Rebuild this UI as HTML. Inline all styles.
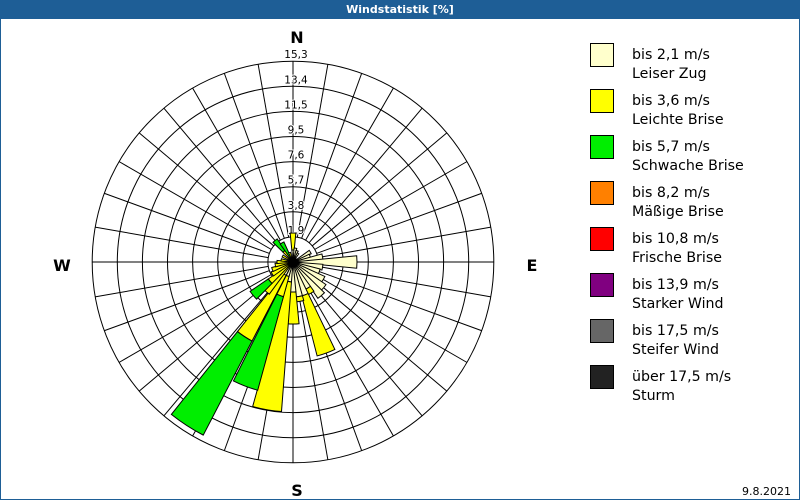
<!DOCTYPE html>
<html><head><meta charset="utf-8">
<style>
html,body{margin:0;padding:0;background:#fff;}
#w{position:relative;width:798px;height:498px;border:1px solid #1e5e96;background:#fff;overflow:hidden;font-family:"DejaVu Sans","Liberation Sans",sans-serif;}
#t{position:absolute;left:0;top:0;width:798px;height:18px;background:#1e5e96;color:#fff;font-weight:bold;font-size:11px;line-height:18px;text-align:center;}
.lb{position:absolute;left:589px;width:22px;height:22px;border:1px solid #000;}
.lt{position:absolute;left:631px;font-size:14.2px;line-height:19px;color:#000;}
#d{position:absolute;right:8px;top:484px;font-size:11px;}
svg{position:absolute;left:0;top:0;}
</style></head><body>
<div id="w">
<div id="t">Windstatistik [%]</div>
<svg id="s" width="798" height="498" xmlns="http://www.w3.org/2000/svg"></svg>
<div class="lb" style="top:42px;background:#ffffcc"></div><div class="lt" style="top:45px">bis 2,1 m/s<br>Leiser Zug</div>
<div class="lb" style="top:88px;background:#ffff00"></div><div class="lt" style="top:91px">bis 3,6 m/s<br>Leichte Brise</div>
<div class="lb" style="top:134px;background:#00ee00"></div><div class="lt" style="top:137px">bis 5,7 m/s<br>Schwache Brise</div>
<div class="lb" style="top:180px;background:#ff8000"></div><div class="lt" style="top:183px">bis 8,2 m/s<br>Mäßige Brise</div>
<div class="lb" style="top:226px;background:#ff0000"></div><div class="lt" style="top:229px">bis 10,8 m/s<br>Frische Brise</div>
<div class="lb" style="top:272px;background:#800080"></div><div class="lt" style="top:275px">bis 13,9 m/s<br>Starker Wind</div>
<div class="lb" style="top:318px;background:#666666"></div><div class="lt" style="top:321px">bis 17,5 m/s<br>Steifer Wind</div>
<div class="lb" style="top:364px;background:#222222"></div><div class="lt" style="top:367px">über 17,5 m/s<br>Sturm</div>
<div id="d">9.8.2021</div>
</div>
<script>
var s=document.getElementById('s'),cx=292,cy=261,h='';
function P(r,a){a=a*Math.PI/180;return [cx+r*Math.sin(a),cy-r*Math.cos(a)];}
for(var i=1;i<=8;i++)h+='<circle cx="'+cx+'" cy="'+cy+'" r="'+(i*25.1)+'" fill="none" stroke="#000" stroke-width="1"/>';
for(var a=0;a<360;a+=10){var p=P(25,a),q=P(201,a);h+='<line x1="'+p[0]+'" y1="'+p[1]+'" x2="'+q[0]+'" y2="'+q[1]+'" stroke="#000" stroke-width="1"/>';}
h+='<line x1="'+cx+'" y1="'+(cy-201)+'" x2="'+cx+'" y2="'+(cy+201)+'" stroke="#000"/><line x1="'+(cx-201)+'" y1="'+cy+'" x2="'+(cx+201)+'" y2="'+cy+'" stroke="#000"/>';
var labs=['1,9','3,8','5,7','7,6','9,5','11,5','13,4','15,3'];
for(i=0;i<8;i++)h+='<text x="'+(cx+3)+'" y="'+(cy-(i+1)*25.1-3)+'" font-size="10.5" text-anchor="middle" font-family="DejaVu Sans,sans-serif" fill="#000" stroke="#fff" stroke-width="2" paint-order="stroke">'+labs[i]+'</text>';
function sec(a,r0,r1,c){var w=5.6,A=P(r0,a-w),B=P(r1,a-w),C=P(r1,a+w),D=P(r0,a+w);
return '<path d="M'+A+'L'+B+'A'+r1+','+r1+' 0 0 1 '+C+'L'+D+(r0>0?'A'+r0+','+r0+' 0 0 0 '+A:'')+'Z" fill="'+c+'" stroke="#000" stroke-width="1"/>';}
var Y='#ffff00',C='#ffffcc',G='#00ee00';
var d=[[0,[[C,12],[Y,29]]],[10,[[C,14]]],[20,[[C,12]]],[30,[[C,10]]],[60,[[C,20]]],[70,[[C,18]]],[80,[[C,30]]],[90,[[C,64]]],[100,[[C,30]]],[110,[[C,28]]],[120,[[C,35]]],[130,[[C,40]]],[140,[[C,44]]],[150,[[C,30],[Y,36]]],[160,[[C,35],[Y,97]]],[170,[[C,35],[Y,40]]],[180,[[C,30],[Y,62]]],[190,[[C,20],[Y,150]]],[201,[[C,15],[Y,36],[G,133]]],[213,[[C,15],[Y,89],[G,195]]],[222,[[Y,40]]],[230,[[Y,30],[G,52]]],[240,[[Y,24]]],[250,[[Y,22]]],[260,[[Y,18]]],[270,[[Y,16]]],[280,[[Y,12]]],[300,[[Y,12]]],[320,[[Y,14],[G,28]]],[330,[[G,22]]],[340,[[Y,10]]]];
d.forEach(function(e){var r0=0;e[1].forEach(function(s2){h+=sec(e[0],r0,s2[1],s2[0]);r0=s2[1];});});
h+='<circle cx="'+cx+'" cy="'+cy+'" r="5" fill="#000"/>';
var L='font-family="DejaVu Sans,sans-serif" font-weight="bold" font-size="16" text-anchor="middle" fill="#000"';
h+='<text x="296" y="42" '+L+'>N</text><text x="296" y="495" '+L+'>S</text><text x="61" y="270" '+L+'>W</text><text x="531" y="270" '+L+'>E</text>';
s.innerHTML=h;
</script>
</body></html>
